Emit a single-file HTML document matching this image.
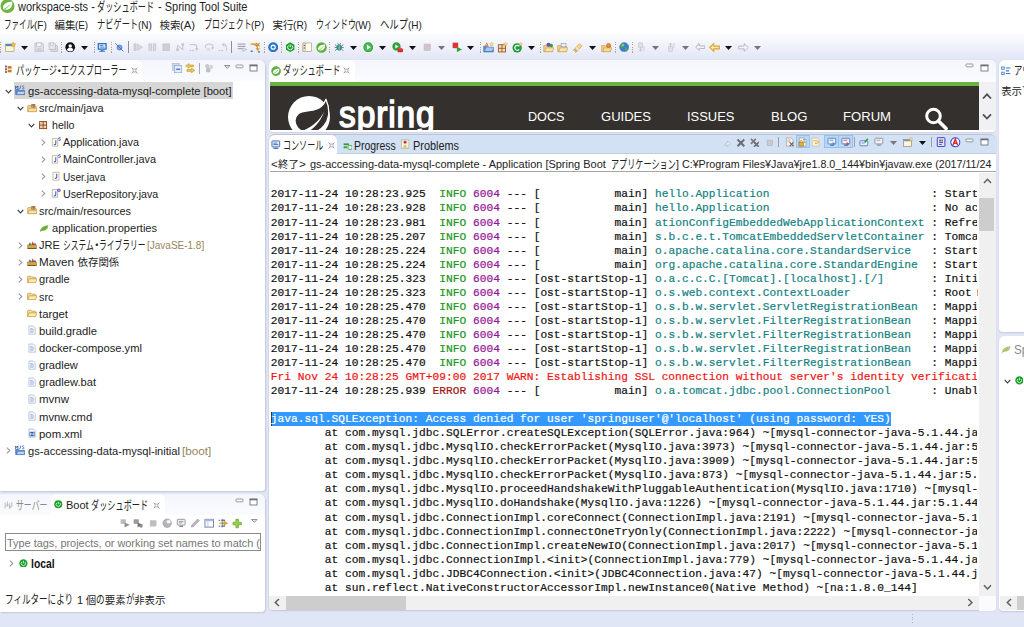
<!DOCTYPE html>
<html lang="ja"><head><meta charset="utf-8"><title>workspace-sts</title>
<style>
*{box-sizing:border-box;margin:0;padding:0}
html,body{width:1024px;height:627px;overflow:hidden;background:#e1e6f6}
body{position:relative;font-family:"Liberation Sans","Noto Sans CJK JP",sans-serif;font-size:11.6px;color:#222}
.a{position:absolute}
.t{position:absolute;white-space:pre;line-height:16px;height:16px;transform-origin:0 50%}
.panel{position:absolute;background:#fff;border-radius:5px 5px 3px 3px}
.mono{font-family:"Liberation Mono","Noto Sans CJK JP",monospace}
.k{display:inline-block;letter-spacing:0;height:16px;vertical-align:top}
.k>i{display:inline-block;transform-origin:0 50%;font-style:normal;font-size:1.04em;position:relative;top:.4px}
.j>i{font-size:.9em;top:0}
.j{font-weight:inherit}
.l,.l>u{display:inline-block;text-decoration:none;vertical-align:top;height:16px}
.l>u{transform-origin:0 50%}
.g{color:#8a8a8a}
.dec{color:#96845a}
#con{position:absolute;left:270.8px;top:173.4px;width:706.2px;letter-spacing:.025px;height:421.5px;overflow:hidden;font-family:"Liberation Mono",monospace;font-size:11.2px;line-height:14.06px;white-space:pre;color:#111;tab-size:8;-webkit-text-stroke:0.2px currentColor}
#con div{height:14.06px}
.i{color:#1a961a}.p{color:#951595}.c{color:#148282}.e{color:#a01414}.r{color:#f01414}
.sel{color:#fff}
</style></head><body>
<div class="a" style="left:0;top:0;width:1024px;height:34px;background:#fff"></div>
<div class="a" style="left:0;top:34px;width:1024px;height:26px;background:linear-gradient(#fcfcff,#eceff9 60%,#e1e6f6)"></div>
<svg class="a" style="left:0;top:-2px" width="16" height="16" viewBox="0 0 16 16"><circle cx="7.5" cy="8" r="7" fill="#6db33f"></circle><path d="M3.2 11.5 C2 7 5.5 4.2 12.2 3.6 C12.8 8 11 12.2 5.2 11.6 C4.4 11.5 3.8 11.5 3.2 11.5Z" fill="#fff"></path><path d="M3.4 11.6 C5.5 10.5 8 9 10 6.6" stroke="#6db33f" stroke-width="0.9" fill="none"></path></svg>
<span class="t " style="left:17.5px;top:-1px;font-size:12.2px;"><u class="l" style="width: 79.85px;"><u style="transform: scaleX(0.9);">workspace-sts - </u></u><i class="k" style="width: 57.18px;"><i style="transform: scaleX(0.6438);">ダッシュボード</i></i><u class="l" style="width: 92.48px;"><u style="transform: scaleX(0.9);"> - Spring Tool Suite</u></u></span>
<span class="t " style="left:3.5px;top:17px;"><i class="k" style="width: 30.26px;"><i style="transform: scaleX(0.6271);">ファイル</i></i><u class="l" style="width: 12.74px;"><u style="transform: scaleX(0.86);">(F)</u></u></span>
<span class="t " style="left:54.5px;top:17px;"><i class="k j" style="width:20.88px"><i>編集</i></i><u class="l" style="width: 13.13px;"><u style="transform: scaleX(0.8485);">(E)</u></u></span>
<span class="t " style="left:96.5px;top:17px;"><i class="k" style="width: 41.15px;"><i style="transform: scaleX(0.6821);">ナビゲート</i></i><u class="l" style="width: 13.85px;"><u style="transform: scaleX(0.86);">(N)</u></u></span>
<span class="t " style="left:159.5px;top:17px;"><i class="k j" style="width:20.88px"><i>検索</i></i><u class="l" style="width: 15.13px;"><u style="transform: scaleX(0.9778);">(A)</u></u></span>
<span class="t " style="left:203.5px;top:17px;"><i class="k" style="width: 47.7px;"><i style="transform: scaleX(0.6589);">プロジェクト</i></i><u class="l" style="width: 13.3px;"><u style="transform: scaleX(0.86);">(P)</u></u></span>
<span class="t " style="left:272.5px;top:17px;"><i class="k j" style="width:20.88px"><i>実行</i></i><u class="l" style="width: 14.13px;"><u style="transform: scaleX(0.8768);">(R)</u></u></span>
<span class="t " style="left:315.5px;top:17px;"><i class="k" style="width: 39.94px;"><i style="transform: scaleX(0.6622);">ウィンドウ</i></i><u class="l" style="width: 16.06px;"><u style="transform: scaleX(0.86);">(W)</u></u></span>
<span class="t " style="left:379.5px;top:17px;"><i class="k" style="width: 28.15px;"><i style="transform: scaleX(0.7777);">ヘルプ</i></i><u class="l" style="width: 13.85px;"><u style="transform: scaleX(0.86);">(H)</u></u></span>
<div class="a" style="left:0.3px;top:42px;width:1px;height:10.5px;background:repeating-linear-gradient(#b3a284 0 1.1px,transparent 1.1px 2.35px)"></div>
<svg class="a" style="left:4.50px;top:41.50px" width="11" height="11" viewBox="0 0 16 16"><rect x="1" y="3" width="12" height="11" fill="#fdf6dc" stroke="#b59a5a"></rect><rect x="1" y="3" width="12" height="3" fill="#4f86c6"></rect><path d="M12 0l1.2 2.3 2.5.4-1.8 1.8.4 2.5L12 5.8 9.7 7l.4-2.5L8.300 2.700l2.500-.4z" fill="#f2c230" stroke="#b98a12" stroke-width=".5"></path></svg>
<svg class="a" style="left:20.50px;top:45.60px" width="7" height="4" viewBox="0 0 7 4"><path d="M0 0H7L3.5 4Z" fill="#111"></path></svg>
<svg class="a" style="left:33.60px;top:41.80px" width="10.4" height="10.4" viewBox="0 0 16 16"><path d="M1.500 1.500h11l2 2v11h-13z" fill="#e4e4e6" stroke="#b4b4b8"></path><rect x="4" y="1.500" width="7" height="5" fill="#f8f8f8" stroke="#b9b9bd"></rect><rect x="4" y="9.500" width="8" height="5" fill="#cfcfd3"></rect></svg>
<svg class="a" style="left:47.80px;top:41.80px" width="10.4" height="10.4" viewBox="0 0 16 16"><path d="M4.500 4.500h8l2 2v8h-10z" fill="#dcdcdf" stroke="#b4b4b8"></path><path d="M1.500 1.500h8l2 2v8h-10z" fill="#e6e6e8" stroke="#b4b4b8"></path><rect x="3.500" y="1.500" width="5" height="3.500" fill="#f8f8f8" stroke="#bbb"></rect></svg>
<div class="a" style="left:61.0px;top:42px;width:1px;height:10.5px;background:repeating-linear-gradient(#b3a284 0 1.1px,transparent 1.1px 2.35px)"></div>
<svg class="a" style="left:65.30px;top:41.80px" width="10.4" height="10.4" viewBox="0 0 16 16"><circle cx="8" cy="8" r="7.500" fill="#111"></circle><circle cx="8" cy="6" r="2.700" fill="#fff"></circle><path d="M3 12.500c.8-3 2.500-3.600 5-3.600s4.200.6 5 3.600c-1.500 1.600-3 2.200-5 2.200s-3.500-.6-5-2.200z" fill="#fff"></path></svg>
<svg class="a" style="left:81.00px;top:45.60px" width="7" height="4" viewBox="0 0 7 4"><path d="M0 0H7L3.5 4Z" fill="#111"></path></svg>
<div class="a" style="left:93.5px;top:42px;width:1px;height:10.5px;background:repeating-linear-gradient(#b3a284 0 1.1px,transparent 1.1px 2.35px)"></div>
<svg class="a" style="left:97.30px;top:41.80px" width="10.4" height="10.4" viewBox="0 0 16 16"><rect x="1" y="1.500" width="14" height="10.500" rx="1" fill="#2f6fc4"></rect><rect x="3" y="3.500" width="10" height="6.500" fill="#dfeaf8"></rect><rect x="4.500" y="5" width="5" height="1.200" fill="#2f6fc4"></rect><rect x="4.500" y="7.200" width="7" height="1.200" fill="#2f6fc4"></rect><rect x="6" y="12" width="4" height="1.500" fill="#2f6fc4"></rect><rect x="3.500" y="13.500" width="9" height="1.500" fill="#2f6fc4"></rect></svg>
<div class="a" style="left:111.0px;top:42px;width:1px;height:10.5px;background:repeating-linear-gradient(#b3a284 0 1.1px,transparent 1.1px 2.35px)"></div>
<svg class="a" style="left:114.10px;top:41.80px" width="10.4" height="10.4" viewBox="0 0 16 16"><circle cx="8.500" cy="8.500" r="3.800" fill="#7fa9de" stroke="#3a6cb8" stroke-width="1.100"></circle><path d="M2 2l12.500 12.500" stroke="#3a6cb8" stroke-width="1.400"></path></svg>
<div class="a" style="left:128.0px;top:41px;width:1px;height:12px;background:#8f8f98"></div>
<svg class="a" style="left:133.30px;top:41.80px" width="10.4" height="10.4" viewBox="0 0 16 16"><rect x="1.500" y="3" width="3" height="10" fill="#d9d9dc" stroke="#bdbdc2"></rect><path d="M6.500 3l8 5-8 5z" fill="#d9d9dc" stroke="#bdbdc2"></path></svg>
<svg class="a" style="left:147.30px;top:41.80px" width="10.4" height="10.4" viewBox="0 0 16 16"><rect x="3" y="3" width="4" height="10" fill="#dcdcdf" stroke="#bdbdc2"></rect><rect x="9.500" y="3" width="4" height="10" fill="#dcdcdf" stroke="#bdbdc2"></rect></svg>
<svg class="a" style="left:161.30px;top:41.80px" width="10.4" height="10.4" viewBox="0 0 16 16"><rect x="3" y="3" width="10" height="10" fill="#cfcfd3" stroke="#bdbdc2"></rect></svg>
<svg class="a" style="left:174.80px;top:41.80px" width="10.4" height="10.4" viewBox="0 0 16 16"><circle cx="4" cy="12" r="2.200" fill="#c4c4c9"></circle><circle cx="12" cy="4" r="2.200" fill="#c4c4c9"></circle><path d="M4 12V5l8 7V4" stroke="#c0c0c5" stroke-width="1.500" fill="none"></path></svg>
<svg class="a" style="left:188.80px;top:41.80px" width="10.4" height="10.4" viewBox="0 0 16 16"><path d="M1 4h7c3 0 4 2 4 5v2" stroke="#c4c4c9" stroke-width="1.600" fill="none"></path><path d="M9 9.500h6l-3 4z" fill="#c4c4c9"></path><rect x="1" y="12.500" width="2.500" height="1.500" fill="#b9b9c8"></rect><rect x="5" y="12.500" width="2.500" height="1.500" fill="#b9b9c8"></rect></svg>
<svg class="a" style="left:203.80px;top:41.80px" width="10.4" height="10.4" viewBox="0 0 16 16"><path d="M2 9c0-4 3-6 6-6s6 2 6 6" stroke="#c8c8cc" stroke-width="1.600" fill="none"></path><path d="M10.500 8h5l-2.500 4z" fill="#c8c8cc"></path><rect x="4" y="10" width="5" height="3" rx="1.500" fill="none" stroke="#c8c8cc"></rect></svg>
<svg class="a" style="left:217.80px;top:41.80px" width="10.4" height="10.4" viewBox="0 0 16 16"><path d="M13 13V8c0-3-1.500-4-4-4" stroke="#c8c8cc" stroke-width="1.600" fill="none"></path><path d="M10 1v6.500L5.500 4.200z" fill="#c8c8cc"></path><rect x="1" y="12.500" width="2.500" height="1.500" fill="#b9b9c8"></rect><rect x="5" y="12.500" width="2.500" height="1.500" fill="#b9b9c8"></rect></svg>
<div class="a" style="left:230.9px;top:41px;width:1px;height:12px;background:#8f8f98"></div>
<svg class="a" style="left:236.60px;top:41.80px" width="10.4" height="10.4" viewBox="0 0 16 16"><rect x="1" y="2.500" width="12" height="1.600" fill="#9c9ca2"></rect><rect x="1" y="6" width="12" height="1.600" fill="#9c9ca2"></rect><rect x="1" y="9.500" width="8" height="1.600" fill="#9c9ca2"></rect><path d="M9 9l6 2.500-6 3z" fill="#e9e9ec" stroke="#9c9ca2" stroke-width=".8"></path></svg>
<svg class="a" style="left:249.90px;top:41.50px" width="11" height="11" viewBox="0 0 16 16"><path d="M1 3h9" stroke="#d79a2b" stroke-width="2"></path><path d="M5 4c5 0 6 2 6 6" stroke="#d79a2b" stroke-width="1.800" fill="none"></path><path d="M8 9h6.500l-3.200 4z" fill="#d79a2b"></path><path d="M9 1.500l5 5M14 1.500l-5 5" stroke="#c7861c" stroke-width="1.600"></path><rect x="1" y="12.500" width="3" height="1.800" fill="#3d63b8"></rect><rect x="11.500" y="13.500" width="3" height="1.800" fill="#3d63b8"></rect></svg>
<div class="a" style="left:263.7px;top:42px;width:1px;height:10.5px;background:repeating-linear-gradient(#b3a284 0 1.1px,transparent 1.1px 2.35px)"></div>
<svg class="a" style="left:267.80px;top:41.80px" width="10.4" height="10.4" viewBox="0 0 16 16"><circle cx="8" cy="8" r="7.700" fill="#2877c6"></circle><circle cx="8" cy="8" r="4" fill="#fff"></circle><circle cx="8" cy="8" r="2" fill="#2877c6"></circle></svg>
<div class="a" style="left:280.9px;top:42px;width:1px;height:10.5px;background:repeating-linear-gradient(#b3a284 0 1.1px,transparent 1.1px 2.35px)"></div>
<svg class="a" style="left:285.00px;top:41.80px" width="10.4" height="10.4" viewBox="0 0 16 16"><path d="M8 .5l6.500 3.750v7.500L8 15.500l-6.500-3.750v-7.500z" fill="#19a027"></path><path d="M5.300 5.300a3.900 3.900 0 1 0 5.400 0" stroke="#fff" stroke-width="1.400" fill="none"></path><path d="M8 3.500v4.500" stroke="#fff" stroke-width="1.400"></path></svg>
<div class="a" style="left:297.9px;top:42px;width:1px;height:10.5px;background:repeating-linear-gradient(#b3a284 0 1.1px,transparent 1.1px 2.35px)"></div>
<svg class="a" style="left:302.00px;top:41.80px" width="10.4" height="10.4" viewBox="0 0 16 16"><rect x="1.500" y="1.500" width="13" height="13" fill="#fefcf4" stroke="#a89a72"></rect><rect x="1.500" y="1.500" width="3.500" height="13" fill="#f0e8cc" stroke="#a89a72" stroke-width=".8"></rect><rect x="2.800" y="4.500" width="2" height="1.500" fill="#555"></rect><rect x="2.800" y="8.500" width="2" height="1.500" fill="#555"></rect></svg>
<svg class="a" style="left:315.80px;top:41.50px" width="11" height="11" viewBox="0 0 16 16"><circle cx="8" cy="8" r="7.600" fill="#5fb03a"></circle><path d="M3.300 12c-1.300-4.800 2.600-7.600 9.600-8.200.7 4.900-1.300 9.200-7.400 8.500-.9-.1-1.500-.2-2.200-.3z" fill="#fff"></path><path d="M3.400 12.200c2.300-1.200 5-2.900 7.200-5.600" stroke="#5fb03a" stroke-width="1" fill="none"></path></svg>
<div class="a" style="left:329.3px;top:42px;width:1px;height:10.5px;background:repeating-linear-gradient(#b3a284 0 1.1px,transparent 1.1px 2.35px)"></div>
<svg class="a" style="left:334.20px;top:41.80px" width="10.4" height="10.4" viewBox="0 0 16 16"><ellipse cx="8" cy="8.500" rx="3.600" ry="4.300" fill="#3f9a8a" stroke="#1f6a62"></ellipse><path d="M8 4.200v8.600" stroke="#cfe9e2" stroke-width=".8"></path><path d="M1.500 4l3 2.500M14.500 4l-3 2.500M1 8.500h3.500M15 8.500h-3.500M1.500 13.500l3-2.500M14.500 13.500l-3-2.500M5.500 1.500l1.500 2.500M10.500 1.500L9 4" stroke="#35607a" stroke-width="1.100"></path></svg>
<svg class="a" style="left:350.00px;top:45.60px" width="7" height="4" viewBox="0 0 7 4"><path d="M0 0H7L3.5 4Z" fill="#111"></path></svg>
<svg class="a" style="left:362.90px;top:41.80px" width="10.4" height="10.4" viewBox="0 0 16 16"><circle cx="8" cy="8" r="7.500" fill="#2fa338"></circle><circle cx="8" cy="8" r="6" fill="#47b84e"></circle><path d="M6 4l6 4-6 4z" fill="#fff"></path></svg>
<svg class="a" style="left:379.40px;top:45.60px" width="7" height="4" viewBox="0 0 7 4"><path d="M0 0H7L3.5 4Z" fill="#111"></path></svg>
<svg class="a" style="left:392.30px;top:41.50px" width="11" height="11" viewBox="0 0 16 16"><circle cx="6.500" cy="6.500" r="6" fill="#2fa338"></circle><path d="M4.800 3.500l4.700 3-4.700 3z" fill="#fff"></path><rect x="8" y="9.500" width="8" height="5.500" rx="1.500" fill="#d92b2b"></rect><rect x="9.500" y="8.500" width="5" height="2.500" rx="1" fill="#e35252"></rect></svg>
<svg class="a" style="left:408.70px;top:45.60px" width="7" height="4" viewBox="0 0 7 4"><path d="M0 0H7L3.5 4Z" fill="#111"></path></svg>
<svg class="a" style="left:422.40px;top:41.80px" width="10.4" height="10.4" viewBox="0 0 16 16"><rect x="3.200" y="3.200" width="9.600" height="9.600" fill="#d2c4c8" stroke="#c6babe"></rect></svg>
<svg class="a" style="left:438.00px;top:45.60px" width="7" height="4" viewBox="0 0 7 4"><path d="M0 0H7L3.5 4Z" fill="#737378"></path></svg>
<svg class="a" style="left:451.80px;top:41.80px" width="10.4" height="10.4" viewBox="0 0 16 16"><rect x="1" y="1" width="8.500" height="8.500" fill="#e03434"></rect><path d="M7.500 7.500l8 4-8 4z" fill="#2fa338"></path></svg>
<svg class="a" style="left:467.30px;top:45.60px" width="7" height="4" viewBox="0 0 7 4"><path d="M0 0H7L3.5 4Z" fill="#111"></path></svg>
<div class="a" style="left:479.5px;top:42px;width:1px;height:10.5px;background:repeating-linear-gradient(#b3a284 0 1.1px,transparent 1.1px 2.35px)"></div>
<svg class="a" style="left:482.90px;top:41.50px" width="11" height="11" viewBox="0 0 16 16"><path d="M1 14.500V6h5l1.500 1.500H15v7z" fill="#5b8fd6" stroke="#2f5fa8" stroke-width=".8"></path><path d="M3 13l2-5h10l-2 5z" fill="#a9c8ee"></path><path d="M5 1l-2.500 6h1.300l.5-1.400h2.400l.5 1.400H8.500L6 1zM4.700 4.600l.8-2.300.8 2.300z" fill="#d9731a"></path><path d="M12.500 0l.9 1.900 2.100.3-1.500 1.500.3 2.100-1.800-1-1.900 1 .4-2.100-1.500-1.500 2.100-.3z" fill="#f7dc8a" stroke="#cfa84e" stroke-width=".5"></path></svg>
<svg class="a" style="left:497.30px;top:41.50px" width="11" height="11" viewBox="0 0 16 16"><rect x="2" y="4" width="10.500" height="10.500" fill="#f1dcc0" stroke="#9a5a1f" stroke-width="1.300"></rect><path d="M7.200 4v10.500M2 9.200h10.500" stroke="#9a5a1f" stroke-width="1.300"></path><path d="M12.500 0l.9 1.900 2.100.3-1.500 1.500.3 2.100-1.800-1-1.900 1 .4-2.100-1.500-1.500 2.100-.3z" fill="#f7dc8a" stroke="#cfa84e" stroke-width=".5"></path></svg>
<svg class="a" style="left:511.80px;top:41.50px" width="11" height="11" viewBox="0 0 16 16"><circle cx="7.500" cy="8.500" r="6.800" fill="#1e9a3a"></circle><path d="M10.500 6.200a3.600 3.600 0 1 0 0 4.600" stroke="#fff" stroke-width="1.700" fill="none"></path><path d="M12.500 0l.9 1.900 2.100.3-1.500 1.500.3 2.100-1.800-1-1.900 1 .4-2.100-1.500-1.500 2.100-.3z" fill="#f7dc8a" stroke="#cfa84e" stroke-width=".5"></path></svg>
<svg class="a" style="left:527.90px;top:45.60px" width="7" height="4" viewBox="0 0 7 4"><path d="M0 0H7L3.5 4Z" fill="#111"></path></svg>
<div class="a" style="left:539.7px;top:42px;width:1px;height:10.5px;background:repeating-linear-gradient(#b3a284 0 1.1px,transparent 1.1px 2.35px)"></div>
<svg class="a" style="left:542.90px;top:41.50px" width="11" height="11" viewBox="0 0 16 16"><path d="M1 14V5h4.500l1.500 1.500H14V14z" fill="#f0cc84" stroke="#bf9440" stroke-width=".8"></path><path d="M2.500 14l2-5.500H16L13.500 14z" fill="#f9e3ae" stroke="#bf9440" stroke-width=".8"></path><circle cx="8" cy="4" r="3" fill="#6a4fb3"></circle><circle cx="12" cy="5" r="2.500" fill="#2e9a52"></circle></svg>
<svg class="a" style="left:557.30px;top:41.50px" width="11" height="11" viewBox="0 0 16 16"><path d="M1 14V5h4.500l1.500 1.500H14V14z" fill="#f0cc84" stroke="#bf9440" stroke-width=".8"></path><path d="M2.500 14l2-5.500H16L13.500 14z" fill="#f9e3ae" stroke="#bf9440" stroke-width=".8"></path><rect x="6" y="2" width="7" height="5" fill="#eef2fa" stroke="#7b8bb0" stroke-width=".8"></rect></svg>
<svg class="a" style="left:571.90px;top:41.50px" width="11" height="11" viewBox="0 0 16 16"><path d="M1.500 12.500L11 2.500l3.500 3.500-9.500 9.500z" fill="#f4d48a" stroke="#c59a46" stroke-width=".9"></path><path d="M3.500 10.500l3.500 3.500" stroke="#9a9aa6" stroke-width="1.600"></path><path d="M6 8l3.500 3.500" stroke="#fff3cc" stroke-width="1.500"></path><path d="M1.500 12.500l3.500 3L2 16z" fill="#fff"></path></svg>
<svg class="a" style="left:588.70px;top:45.60px" width="7" height="4" viewBox="0 0 7 4"><path d="M0 0H7L3.5 4Z" fill="#111"></path></svg>
<svg class="a" style="left:601.30px;top:41.50px" width="11" height="11" viewBox="0 0 16 16"><path d="M1 14V5h4.500l1.500 1.500H14V14z" fill="#f0cc84" stroke="#bf9440" stroke-width=".8"></path><path d="M2.500 14l2-5.500H16L13.500 14z" fill="#f7d996" stroke="#bf9440" stroke-width=".8"></path><circle cx="11" cy="5" r="3" fill="#e88b3a" stroke="#a85a14" stroke-width=".8"></circle></svg>
<div class="a" style="left:614.5px;top:42px;width:1px;height:10.5px;background:repeating-linear-gradient(#b3a284 0 1.1px,transparent 1.1px 2.35px)"></div>
<svg class="a" style="left:618.80px;top:41.80px" width="10.4" height="10.4" viewBox="0 0 16 16"><circle cx="8" cy="8" r="7.200" fill="#3b7fd1" stroke="#7d8aa5" stroke-width=".9"></circle><path d="M4 3.500c2-.8 4 .2 4.500 2 .4 1.700-1.500 2.200-2.500 3.500-.8 1-2 .5-2.800-1C2.400 6.500 2.800 4.300 4 3.500zM10 8.500c1.500-.5 3 .3 3.200 1.800.2 1.400-1.200 2.800-2.600 2.900-1.200 0-1.800-3.800-.6-4.700z" fill="#4cad4a"></path><ellipse cx="6" cy="4.500" rx="2.200" ry="1.200" fill="#cfe3fa" opacity=".75"></ellipse></svg>
<div class="a" style="left:631.9px;top:42px;width:1px;height:10.5px;background:repeating-linear-gradient(#b3a284 0 1.1px,transparent 1.1px 2.35px)"></div>
<svg class="a" style="left:636.00px;top:41.80px" width="10.4" height="10.4" viewBox="0 0 16 16"><rect x="4" y="1" width="6" height="8" rx="1" fill="#e2e2e6" stroke="#c3c3c9"></rect><path d="M7 8v6M4 11.500l3 3 3-3" stroke="#c3c3c9" stroke-width="1.400" fill="none"></path><rect x="11.500" y="6" width="1.500" height="8.500" fill="#d0d0d6"></rect></svg>
<svg class="a" style="left:652.10px;top:45.60px" width="7" height="4" viewBox="0 0 7 4"><path d="M0 0H7L3.5 4Z" fill="#737378"></path></svg>
<svg class="a" style="left:665.50px;top:41.80px" width="10.4" height="10.4" viewBox="0 0 16 16"><rect x="4" y="6.500" width="6" height="8" rx="1" fill="#e2e2e6" stroke="#c3c3c9"></rect><path d="M7 8V2M4 4.500l3-3 3 3" stroke="#c3c3c9" stroke-width="1.400" fill="none"></path><rect x="11.500" y="1.500" width="1.500" height="8.500" fill="#d0d0d6"></rect></svg>
<svg class="a" style="left:681.80px;top:45.60px" width="7" height="4" viewBox="0 0 7 4"><path d="M0 0H7L3.5 4Z" fill="#737378"></path></svg>
<svg class="a" style="left:694.50px;top:41.80px" width="10.4" height="10.4" viewBox="0 0 16 16"><path d="M1 8l5.500-5v3H15v4H6.500v3z" fill="#f4f4f6" stroke="#b0b0b8" stroke-width="1.300"></path><path d="M3 3l1 1M5 1.500l.5 1.500" stroke="#bdbdc4"></path></svg>
<svg class="a" style="left:708.80px;top:41.50px" width="11" height="11" viewBox="0 0 16 16"><path d="M1 8l6-5.500V6h8v4H7v3.500z" fill="#fcecb0" stroke="#dca02c" stroke-width="1.500"></path></svg>
<svg class="a" style="left:725.20px;top:45.60px" width="7" height="4" viewBox="0 0 7 4"><path d="M0 0H7L3.5 4Z" fill="#111"></path></svg>
<svg class="a" style="left:737.80px;top:41.50px" width="11" height="11" viewBox="0 0 16 16"><path d="M15 8L9 2.500V6H1v4h8v3.500z" fill="#f6f6f8" stroke="#b0b0b8" stroke-width="1.300"></path></svg>
<svg class="a" style="left:754.20px;top:45.60px" width="7" height="4" viewBox="0 0 7 4"><path d="M0 0H7L3.5 4Z" fill="#737378"></path></svg>
<div class="panel" style="left:0;top:60px;width:265.4px;height:431px;border-radius:0 6px 3px 0;box-shadow:1px 1px 1.500px #c3c8dc"></div>
<div class="a" style="left:0;top:60px;width:265.4px;height:20.6px;background:linear-gradient(#f5f6fc,#fafbfe);border-radius:0 6px 0 0"></div>
<div class="a" style="left:0;top:60px;width:141.6px;height:21px;background:#fff;border-radius:0 6px 0 0"></div>
<svg class="a" style="left:4.00px;top:65.10px" width="9" height="9" viewBox="0 0 16 16"><rect x="2" y="1" width="3" height="3" fill="#6a5a4a"></rect><rect x="2" y="6" width="3" height="3" fill="#6a5a4a"></rect><rect x="2" y="11" width="3" height="3" fill="#6a5a4a"></rect><rect x="6.500" y="2" width="7" height="4.500" fill="#c8772c"></rect><rect x="6.500" y="8.500" width="7" height="4.500" fill="#c8772c"></rect><path d="M3.500 1v13" stroke="#6a5a4a" stroke-width=".8"></path></svg>
<span class="t " style="left:15.5px;top:62.5px;"><i class="k" style="width: 41.31px;"><i style="transform: scaleX(0.6848);">パッケージ</i></i><i class="k j" style="width:4.6px"><i style="margin-left:-3.2px;font-size:1em">・</i></i><i class="k" style="width: 66.1px;"><i style="transform: scaleX(0.6848);">エクスプローラー</i></i></span>
<svg class="a" style="left:130.5px;top:66.8px" width="7" height="7" viewBox="0 0 7 7"><path d="M.6.6L2.300 2.300M6.400.6L4.700 2.300M.6 6.400L2.300 4.700M6.400 6.400L4.700 4.700" stroke="#9a9aa2" stroke-width=".9"></path><rect x="2" y="2" width="3" height="3" fill="none" stroke="#9a9aa2" stroke-width=".7"></rect></svg>
<svg class="a" style="left:171.70px;top:62.80px" width="10.4" height="10.4" viewBox="0 0 16 16"><rect x="1" y="1" width="10" height="10" fill="#cfdcf0" stroke="#9fb3d6"></rect><rect x="4" y="4" width="11" height="11" fill="#e4ecf8" stroke="#7f9ccc"></rect><rect x="6.500" y="8.700" width="6" height="1.800" fill="#2f66b5"></rect></svg>
<svg class="a" style="left:185.40px;top:63.00px" width="10.4" height="10.4" viewBox="0 0 16 16"><path d="M6 1L1 4.500 6 8V5.800h7V3.200H6z" fill="#f7cf58" stroke="#b8860b" stroke-width=".9"></path><path d="M10 8l5 3.500-5 3.500v-2.200H3v-2.600h7z" fill="#f7cf58" stroke="#b8860b" stroke-width=".9"></path></svg>
<div class="a" style="left:199.0px;top:63px;width:1px;height:11px;background:#a9a9b3"></div>
<svg class="a" style="left:204.40px;top:62.80px" width="10.4" height="10.4" viewBox="0 0 16 16"><circle cx="5" cy="5" r="3.300" fill="#c9c9cf"></circle><circle cx="11" cy="6" r="3.300" fill="#d4d4d9"></circle><circle cx="6.500" cy="11" r="3.600" fill="#bdbdc4"></circle></svg>
<svg class="a" style="left:223.7px;top:64.5px" width="6.600" height="4" viewBox="0 0 6.600 4"><path d="M.5.500H6.100L3.300 3.400Z" fill="#e6e6ea" stroke="#77777f" stroke-width=".8"></path></svg>
<svg class="a" style="left:234.9px;top:63.5px" width="9" height="5" viewBox="0 0 9 5"><rect x="1" y="1" width="7" height="2.800" rx=".8" fill="#fff" stroke="#85858d" stroke-width=".85"></rect></svg>
<svg class="a" style="left:249.0px;top:63.599999999999994px" width="9" height="8" viewBox="0 0 9 8"><rect x="1" y="1.200" width="7" height="5.800" fill="#fff" stroke="#6e6e76" stroke-width=".85"></rect><rect x=".6" y=".6" width="7.800" height="1.700" fill="#6e6e76"></rect></svg>
<div class="a" style="left:14px;top:82px;width:219px;height:16.800px;background:#d6d6d6"></div>
<svg class="a" style="left:4.5px;top:88.6px" width="7" height="5" viewBox="0 0 7 5"><path d="M.7.800L3.500 3.800 6.300.8" stroke="#3c3c3c" stroke-width="1.150" fill="none"></path></svg>
<svg class="a" style="left:15.20px;top:85.40px" width="10.2" height="10.2" viewBox="0 0 16 16"><path d="M1 15V7h5l1.500 1.500H15V15z" fill="#5c8fd8" stroke="#2d5ca6" stroke-width=".9"></path><path d="M2.500 15l1.800-5H16l-2 5z" fill="#b9d3f3" stroke="#2d5ca6" stroke-width=".7"></path><path d="M1 6.500v-5l1.800 2.500L4.600 1.500v5" stroke="#2a4a9a" stroke-width="1.200" fill="none"></path><path d="M8.500 1v3.600c0 1.200-1.400 1.300-2 .6" stroke="#3b5fb5" stroke-width="1.200" fill="none"></path><path d="M14.300 1.600c-1.600-1-3.200-.2-2.800 1 .4 1.100 2.800.9 2.900 2.300.1 1.200-1.900 1.600-3.300.6" stroke="#2a6fd0" stroke-width="1.200" fill="none"></path></svg>
<span class="t " style="left:28.4px;top:82.9px;"><u class="l" style="width: 203.5px;"><u style="transform: scaleX(0.9628);">gs-accessing-data-mysql-complete [boot]</u></u></span>
<svg class="a" style="left:16.5px;top:105.74px" width="7" height="5" viewBox="0 0 7 5"><path d="M.7.800L3.500 3.800 6.300.8" stroke="#3c3c3c" stroke-width="1.150" fill="none"></path></svg>
<svg class="a" style="left:26.90px;top:102.54px" width="10.2" height="10.2" viewBox="0 0 16 16"><path d="M1 13.500V5.500c0-1 .5-1.500 1.500-1.500H6l1.500 1.500h6c1 0 1.500.5 1.500 1.500v6.500z" fill="#f0cf86" stroke="#b48a36" stroke-width=".9"></path><path d="M1.500 13.500l1.800-5H16l-2 5z" fill="#f8e2a8" stroke="#b48a36" stroke-width=".7"></path><rect x="7.500" y="2" width="5" height="4.500" fill="#e9c9a0" stroke="#8a4a1c" stroke-width=".9"></rect><path d="M10 2v4.500M7.500 4.200h5" stroke="#8a4a1c" stroke-width=".8"></path></svg>
<span class="t " style="left:39.3px;top:100.04px;"><u class="l" style="width: 64.7px;"><u style="transform: scaleX(0.9473);">src/main/java</u></u></span>
<svg class="a" style="left:28.3px;top:122.88px" width="7" height="5" viewBox="0 0 7 5"><path d="M.7.800L3.500 3.800 6.300.8" stroke="#3c3c3c" stroke-width="1.150" fill="none"></path></svg>
<svg class="a" style="left:38.30px;top:119.68px" width="10.2" height="10.2" viewBox="0 0 16 16"><rect x="2.500" y="2.500" width="11" height="11" fill="#f0d6b8" stroke="#8e4a18" stroke-width="1.500"></rect><path d="M8 2.500v11M2.500 8h11" stroke="#8e4a18" stroke-width="1.500"></path></svg>
<span class="t " style="left:51.5px;top:117.18px;"><u class="l" style="width: 22.5px;"><u style="transform: scaleX(0.9184);">hello</u></u></span>
<svg class="a" style="left:41.099999999999994px;top:138.72000000000003px" width="5" height="7" viewBox="0 0 5 7"><path d="M.8.700L3.800 3.500.8 6.300" stroke="#9a9a9a" stroke-width="1.100" fill="none"></path></svg>
<svg class="a" style="left:51.10px;top:136.82px" width="10.2" height="10.2" viewBox="0 0 16 16"><path d="M2 2.500h8.500v12H2z" fill="#fffdf3" stroke="#a89c78" stroke-width="1"></path><path d="M7.500 5v5.500c0 1.800-2 1.900-3 1" stroke="#3a5bbf" stroke-width="1.600" fill="none"></path><path d="M15 1.300c-1.500-.9-3.400-.3-3.100.9.300 1 2.900.8 3 2 .1 1.200-2 1.600-3.300.7" stroke="#2f4fd8" stroke-width="1.400" fill="none"></path></svg>
<span class="t " style="left:63px;top:134.32000000000002px;"><u class="l" style="width: 76px;"><u style="transform: scaleX(0.9357);">Application.java</u></u></span>
<svg class="a" style="left:41.099999999999994px;top:155.86px" width="5" height="7" viewBox="0 0 5 7"><path d="M.8.700L3.800 3.500.8 6.300" stroke="#9a9a9a" stroke-width="1.100" fill="none"></path></svg>
<svg class="a" style="left:51.10px;top:153.96px" width="10.2" height="10.2" viewBox="0 0 16 16"><path d="M2 2.500h8.500v12H2z" fill="#fffdf3" stroke="#a89c78" stroke-width="1"></path><path d="M7.500 5v5.500c0 1.800-2 1.900-3 1" stroke="#3a5bbf" stroke-width="1.600" fill="none"></path><path d="M15 1.300c-1.500-.9-3.400-.3-3.100.9.300 1 2.900.8 3 2 .1 1.200-2 1.600-3.300.7" stroke="#2f4fd8" stroke-width="1.400" fill="none"></path></svg>
<span class="t " style="left:63px;top:151.46px;"><u class="l" style="width: 93px;"><u style="transform: scaleX(0.937);">MainController.java</u></u></span>
<svg class="a" style="left:41.099999999999994px;top:173.0px" width="5" height="7" viewBox="0 0 5 7"><path d="M.8.700L3.800 3.500.8 6.300" stroke="#9a9a9a" stroke-width="1.100" fill="none"></path></svg>
<svg class="a" style="left:51.10px;top:171.10px" width="10.2" height="10.2" viewBox="0 0 16 16"><path d="M3 2h9.500v12.500H3z" fill="#fffdf3" stroke="#a89c78" stroke-width="1"></path><path d="M9 4.500v5.500c0 1.800-2 1.900-3 1" stroke="#3a5bbf" stroke-width="1.600" fill="none"></path></svg>
<span class="t " style="left:63px;top:168.6px;"><u class="l" style="width: 42.3px;"><u style="transform: scaleX(0.8753);">User.java</u></u></span>
<svg class="a" style="left:41.099999999999994px;top:190.14000000000001px" width="5" height="7" viewBox="0 0 5 7"><path d="M.8.700L3.800 3.500.8 6.300" stroke="#9a9a9a" stroke-width="1.100" fill="none"></path></svg>
<svg class="a" style="left:51.10px;top:188.24px" width="10.2" height="10.2" viewBox="0 0 16 16"><path d="M2 2.500h8.500v12H2z" fill="#fffdf3" stroke="#8a8a9a" stroke-width="1"></path><path d="M7.500 5v5.500c0 1.800-2 1.900-3 1" stroke="#4a4fc0" stroke-width="1.600" fill="none"></path><circle cx="12.500" cy="3.500" r="2.600" fill="#6a4fc0"></circle><path d="M12.500 2v3" stroke="#fff" stroke-width="1"></path></svg>
<span class="t " style="left:63px;top:185.74px;"><u class="l" style="width: 95.3px;"><u style="transform: scaleX(0.9205);">UserRepository.java</u></u></span>
<svg class="a" style="left:16.5px;top:208.58000000000004px" width="7" height="5" viewBox="0 0 7 5"><path d="M.7.800L3.500 3.800 6.300.8" stroke="#3c3c3c" stroke-width="1.150" fill="none"></path></svg>
<svg class="a" style="left:26.90px;top:205.38px" width="10.2" height="10.2" viewBox="0 0 16 16"><path d="M1 13.500V5.500c0-1 .5-1.500 1.500-1.500H6l1.500 1.500h6c1 0 1.500.5 1.500 1.500v6.500z" fill="#f0cf86" stroke="#b48a36" stroke-width=".9"></path><path d="M1.500 13.500l1.800-5H16l-2 5z" fill="#f8e2a8" stroke="#b48a36" stroke-width=".7"></path><rect x="7.500" y="2" width="5" height="4.500" fill="#e9c9a0" stroke="#8a4a1c" stroke-width=".9"></rect><path d="M10 2v4.500M7.500 4.200h5" stroke="#8a4a1c" stroke-width=".8"></path></svg>
<span class="t " style="left:39.3px;top:202.88000000000002px;"><u class="l" style="width: 92px;"><u style="transform: scaleX(0.9394);">src/main/resources</u></u></span>
<svg class="a" style="left:38.80px;top:222.52px" width="10.2" height="10.2" viewBox="0 0 16 16"><path d="M1.500 13.500C2 8 6 4 14.500 3.500c0 6-4.500 10-11 8.500z" fill="#7ab648"></path><path d="M2 13.500C5 10.500 8 8 12 6" stroke="#4c8a24" stroke-width=".9" fill="none"></path></svg>
<span class="t " style="left:51.5px;top:220.02px;"><u class="l" style="width: 105px;"><u style="transform: scaleX(0.9527);">application.properties</u></u></span>
<svg class="a" style="left:17.8px;top:241.56px" width="5" height="7" viewBox="0 0 5 7"><path d="M.8.700L3.800 3.500.8 6.300" stroke="#9a9a9a" stroke-width="1.100" fill="none"></path></svg>
<svg class="a" style="left:27.10px;top:239.66px" width="10.2" height="10.2" viewBox="0 0 16 16"><rect x="1" y="8" width="14" height="5.500" fill="#d9a648" stroke="#8a6a1e" stroke-width=".7"></rect><path d="M2.500 8l2-5 2.500 5z" fill="#3c8a4a"></path><path d="M6.500 8l2.500-6 2.500 6z" fill="#c2452c"></path><path d="M10.500 8l2-4 2 4z" fill="#3f66b8"></path><rect x="1" y="12.500" width="14" height="1.500" fill="#6b531a"></rect></svg>
<span class="t " style="left:39.3px;top:237.16px;"><u class="l" style="width: 23.87px;"><u style="transform: scaleX(0.95);">JRE </u></u><i class="k" style="width: 31.01px;"><i style="transform: scaleX(0.6427);">システム</i></i><i class="k j" style="width:4.6px"><i style="margin-left:-3.2px;font-size:1em">・</i></i><i class="k" style="width: 46.52px;"><i style="transform: scaleX(0.6427);">ライブラリー</i></i></span>
<span class="t dec" style="left:147.3px;top:237.16px;"><u class="l" style="width: 57.2px;"><u style="transform: scaleX(0.8616);">[JavaSE-1.8]</u></u></span>
<svg class="a" style="left:17.8px;top:258.7px" width="5" height="7" viewBox="0 0 5 7"><path d="M.8.700L3.800 3.500.8 6.300" stroke="#9a9a9a" stroke-width="1.100" fill="none"></path></svg>
<svg class="a" style="left:27.10px;top:256.80px" width="10.2" height="10.2" viewBox="0 0 16 16"><rect x="1" y="8" width="14" height="5.500" fill="#d9a648" stroke="#8a6a1e" stroke-width=".7"></rect><path d="M2.500 8l2-5 2.500 5z" fill="#3c8a4a"></path><path d="M6.500 8l2.500-6 2.500 6z" fill="#c2452c"></path><path d="M10.500 8l2-4 2 4z" fill="#3f66b8"></path><rect x="1" y="12.500" width="14" height="1.500" fill="#6b531a"></rect></svg>
<span class="t " style="left:39.3px;top:254.29999999999995px;"><u class="l" style="width: 38.25px;"><u style="transform: scaleX(1.0058);">Maven </u></u><i class="k j" style="width:41.76px"><i>依存関係</i></i></span>
<svg class="a" style="left:17.8px;top:275.84000000000003px" width="5" height="7" viewBox="0 0 5 7"><path d="M.8.700L3.800 3.500.8 6.300" stroke="#9a9a9a" stroke-width="1.100" fill="none"></path></svg>
<svg class="a" style="left:26.70px;top:273.94px" width="10.2" height="10.2" viewBox="0 0 16 16"><path d="M1 13.500V4.500c0-.8.400-1 1-1H6l1.500 1.500h5c.8 0 1 .4 1 1v2" fill="#f6dd9a" stroke="#b58b2e" stroke-width="1"></path><path d="M1 13.500l2.500-6H16l-2.500 6z" fill="#fbe9b4" stroke="#b58b2e" stroke-width="1"></path></svg>
<span class="t " style="left:39.3px;top:271.44px;"><u class="l" style="width: 30.7px;"><u style="transform: scaleX(0.9524);">gradle</u></u></span>
<svg class="a" style="left:17.8px;top:292.98px" width="5" height="7" viewBox="0 0 5 7"><path d="M.8.700L3.800 3.500.8 6.300" stroke="#9a9a9a" stroke-width="1.100" fill="none"></path></svg>
<svg class="a" style="left:26.70px;top:291.08px" width="10.2" height="10.2" viewBox="0 0 16 16"><path d="M1 13.500V4.500c0-.8.400-1 1-1H6l1.500 1.500h5c.8 0 1 .4 1 1v2" fill="#f6dd9a" stroke="#b58b2e" stroke-width="1"></path><path d="M1 13.500l2.500-6H16l-2.500 6z" fill="#fbe9b4" stroke="#b58b2e" stroke-width="1"></path></svg>
<span class="t " style="left:39.3px;top:288.58px;"><u class="l" style="width: 14.5px;"><u style="transform: scaleX(0.9374);">src</u></u></span>
<svg class="a" style="left:26.70px;top:308.22px" width="10.2" height="10.2" viewBox="0 0 16 16"><path d="M1 13.500V4.500c0-.8.400-1 1-1H6l1.500 1.500h5c.8 0 1 .4 1 1v2" fill="#f6dd9a" stroke="#b58b2e" stroke-width="1"></path><path d="M1 13.500l2.500-6H16l-2.500 6z" fill="#fbe9b4" stroke="#b58b2e" stroke-width="1"></path></svg>
<span class="t " style="left:39.3px;top:305.71999999999997px;"><u class="l" style="width: 29px;"><u style="transform: scaleX(0.9779);">target</u></u></span>
<svg class="a" style="left:27.00px;top:325.36px" width="10.2" height="10.2" viewBox="0 0 16 16"><path d="M3 1.500h7l3 3v10H3z" fill="#f4f7fd" stroke="#9aa6c4" stroke-width=".9"></path><path d="M5 5.500h4M5 7.500h6M5 9.500h6M5 11.500h5" stroke="#7f9bd0" stroke-width=".9"></path></svg>
<span class="t " style="left:39.3px;top:322.86px;"><u class="l" style="width: 58px;"><u style="transform: scaleX(0.9674);">build.gradle</u></u></span>
<svg class="a" style="left:27.00px;top:342.50px" width="10.2" height="10.2" viewBox="0 0 16 16"><path d="M3 1.500h7l3 3v10H3z" fill="#f4f7fd" stroke="#9aa6c4" stroke-width=".9"></path><path d="M5 5.500h4M5 7.500h6M5 9.500h6M5 11.500h5" stroke="#7f9bd0" stroke-width=".9"></path></svg>
<span class="t " style="left:39.3px;top:340.0px;"><u class="l" style="width: 103px;"><u style="transform: scaleX(0.9629);">docker-compose.yml</u></u></span>
<svg class="a" style="left:27.00px;top:359.64px" width="10.2" height="10.2" viewBox="0 0 16 16"><path d="M3 1.500h7l3 3v10H3z" fill="#f4f7fd" stroke="#9aa6c4" stroke-width=".9"></path><path d="M5 5.500h4M5 7.500h6M5 9.500h6M5 11.500h5" stroke="#7f9bd0" stroke-width=".9"></path></svg>
<span class="t " style="left:39.3px;top:357.14px;"><u class="l" style="width: 38.8px;"><u style="transform: scaleX(0.9554);">gradlew</u></u></span>
<svg class="a" style="left:27.00px;top:376.78px" width="10.2" height="10.2" viewBox="0 0 16 16"><path d="M3 1.500h7l3 3v10H3z" fill="#f4f7fd" stroke="#9aa6c4" stroke-width=".9"></path><path d="M5 5.500h4M5 7.500h6M5 9.500h6M5 11.500h5" stroke="#7f9bd0" stroke-width=".9"></path></svg>
<span class="t " style="left:39.3px;top:374.28px;"><u class="l" style="width: 57px;"><u style="transform: scaleX(0.961);">gradlew.bat</u></u></span>
<svg class="a" style="left:27.00px;top:393.92px" width="10.2" height="10.2" viewBox="0 0 16 16"><path d="M3 1.500h7l3 3v10H3z" fill="#f4f7fd" stroke="#9aa6c4" stroke-width=".9"></path><path d="M5 5.500h4M5 7.500h6M5 9.500h6M5 11.500h5" stroke="#7f9bd0" stroke-width=".9"></path></svg>
<span class="t " style="left:39.3px;top:391.41999999999996px;"><u class="l" style="width: 30px;"><u style="transform: scaleX(0.9907);">mvnw</u></u></span>
<svg class="a" style="left:27.00px;top:411.06px" width="10.2" height="10.2" viewBox="0 0 16 16"><path d="M3 1.500h7l3 3v10H3z" fill="#f4f7fd" stroke="#9aa6c4" stroke-width=".9"></path><path d="M5 5.500h4M5 7.500h6M5 9.500h6M5 11.500h5" stroke="#7f9bd0" stroke-width=".9"></path></svg>
<span class="t " style="left:39.3px;top:408.56px;"><u class="l" style="width: 53.2px;"><u style="transform: scaleX(0.9714);">mvnw.cmd</u></u></span>
<svg class="a" style="left:27.00px;top:428.20px" width="10.2" height="10.2" viewBox="0 0 16 16"><path d="M3 1.500h7l3 3v10H3z" fill="#f4f7fd" stroke="#9aa6c4" stroke-width=".9"></path><rect x="4" y="6" width="8" height="7" fill="#2f5fae"></rect><path d="M5.500 12V7.500L8 10.500l2.500-3V12" stroke="#fff" stroke-width="1.100" fill="none"></path></svg>
<span class="t " style="left:39.3px;top:425.7px;"><u class="l" style="width: 43px;"><u style="transform: scaleX(0.9815);">pom.xml</u></u></span>
<svg class="a" style="left:5.8px;top:447.24px" width="5" height="7" viewBox="0 0 5 7"><path d="M.8.700L3.800 3.500.8 6.300" stroke="#9a9a9a" stroke-width="1.100" fill="none"></path></svg>
<svg class="a" style="left:15.20px;top:445.34px" width="10.2" height="10.2" viewBox="0 0 16 16"><path d="M1 15V7h5l1.500 1.500H15V15z" fill="#5c8fd8" stroke="#2d5ca6" stroke-width=".9"></path><path d="M2.500 15l1.800-5H16l-2 5z" fill="#b9d3f3" stroke="#2d5ca6" stroke-width=".7"></path><path d="M1 6.500v-5l1.800 2.500L4.600 1.500v5" stroke="#2a4a9a" stroke-width="1.200" fill="none"></path><path d="M8.500 1v3.600c0 1.200-1.400 1.300-2 .6" stroke="#3b5fb5" stroke-width="1.200" fill="none"></path><path d="M14.300 1.600c-1.600-1-3.200-.2-2.800 1 .4 1.100 2.800.9 2.900 2.300.1 1.200-1.900 1.600-3.300.6" stroke="#2a6fd0" stroke-width="1.200" fill="none"></path></svg>
<span class="t " style="left:28.4px;top:442.84px;"><u class="l" style="width: 152px;"><u style="transform: scaleX(0.9589);">gs-accessing-data-mysql-initial</u></u></span>
<span class="t dec" style="left:182.3px;top:442.84px;"><u class="l" style="width: 29.3px;"><u style="transform: scaleX(1.0098);">[boot]</u></u></span>
<div class="panel" style="left:0;top:494.3px;width:265.4px;height:117.500px;border-radius:0 6px 4px 0;box-shadow:1px 1px 1.500px #c3c8dc"></div>
<div class="a" style="left:0;top:494.3px;width:265.4px;height:20.500px;background:linear-gradient(#f5f6fc,#fafbfe);border-radius:0 6px 0 0"></div>
<div class="a" style="left:51.4px;top:494.3px;width:113.400px;height:21px;background:#fff;border-radius:6px 6px 0 0"></div>
<svg class="a" style="left:3.50px;top:500.50px;opacity:0.8" width="9" height="9" viewBox="0 0 16 16"><path d="M2 3v10M6 1v9M10 4v10M14 2v8" stroke="#9aa0ad" stroke-width="1.500"></path><rect x="4" y="6" width="4" height="3" fill="#a9c08a"></rect><rect x="9" y="9" width="4" height="3" fill="#c9a0a0"></rect></svg>
<span class="t g" style="left:16px;top:497.2px;"><i class="k" style="width:31.50px"><i style="transform:scaleX(0.6528)">サーバー</i></i></span>
<svg class="a" style="left:54.20px;top:500.30px" width="8.6" height="8.6" viewBox="0 0 16 16"><circle cx="8" cy="8" r="7.500" fill="#19a027"></circle><path d="M5.300 5.300a3.900 3.900 0 1 0 5.400 0" stroke="#fff" stroke-width="1.400" fill="none"></path><path d="M8 3.200v4.600" stroke="#fff" stroke-width="1.400"></path></svg>
<span class="t " style="left:65.6px;top:497.2px;"><u class="l" style="width: 25.72px;"><u style="transform: scaleX(0.95);">Boot </u></u><i class="k" style="width: 57.28px;"><i style="transform: scaleX(0.6782);">ダッシュボード</i></i></span>
<svg class="a" style="left:152.8px;top:501.7px" width="7" height="7" viewBox="0 0 7 7"><path d="M.6.6L2.300 2.300M6.400.6L4.700 2.300M.6 6.400L2.300 4.700M6.400 6.400L4.700 4.700" stroke="#9a9aa2" stroke-width=".9"></path><rect x="2" y="2" width="3" height="3" fill="none" stroke="#9a9aa2" stroke-width=".7"></rect></svg>
<svg class="a" style="left:234.7px;top:497.8px" width="9" height="5" viewBox="0 0 9 5"><rect x="1" y="1" width="7" height="2.800" rx=".8" fill="#fff" stroke="#85858d" stroke-width=".85"></rect></svg>
<svg class="a" style="left:248.9px;top:498.4px" width="9" height="8" viewBox="0 0 9 8"><rect x="1" y="1.200" width="7" height="5.800" fill="#fff" stroke="#6e6e76" stroke-width=".85"></rect><rect x=".6" y=".6" width="7.800" height="1.700" fill="#6e6e76"></rect></svg>
<svg class="a" style="left:120.00px;top:518.30px" width="10.4" height="10.4" viewBox="0 0 16 16"><rect x="1" y="2" width="8" height="7" fill="#b9b9be"></rect><path d="M7 7l8 3.500-8 4z" fill="#8f8f96"></path></svg>
<svg class="a" style="left:133.20px;top:518.30px" width="10.4" height="10.4" viewBox="0 0 16 16"><rect x="1" y="2" width="8" height="7" fill="#9a9aa0"></rect><path d="M7 7l8 3.500-8 4z" fill="#77777f"></path><circle cx="12.500" cy="12.500" r="2.500" fill="#8a8a90"></circle></svg>
<svg class="a" style="left:148.20px;top:518.30px" width="10.4" height="10.4" viewBox="0 0 16 16"><rect x="3" y="3.500" width="10" height="9.500" fill="#bdbdc2"></rect></svg>
<svg class="a" style="left:161.70px;top:518.30px" width="10.4" height="10.4" viewBox="0 0 16 16"><circle cx="8" cy="8" r="6.500" fill="#b4b4ba" stroke="#9a9aa0"></circle><ellipse cx="10.200" cy="5.800" rx="3.400" ry="2.800" fill="#f4f4f6"></ellipse></svg>
<svg class="a" style="left:175.70px;top:518.30px" width="10.4" height="10.4" viewBox="0 0 16 16"><rect x="2" y="2" width="12" height="9" rx="1" fill="#f3f3f5" stroke="#8a8a92" stroke-width="1.300"></rect><rect x="4.500" y="4.500" width="7" height="1.200" fill="#8a8a92"></rect><rect x="4.500" y="7" width="5" height="1.200" fill="#8a8a92"></rect><rect x="5" y="12" width="6" height="2" fill="#8a8a92"></rect></svg>
<svg class="a" style="left:189.90px;top:518.30px" width="10.4" height="10.4" viewBox="0 0 16 16"><path d="M2 14l1-3.500L12 1.500l2.500 2.500-9 9z" fill="#b9b9bf" stroke="#8a8a92" stroke-width=".8"></path></svg>
<svg class="a" style="left:203.80px;top:518.30px" width="10.4" height="10.4" viewBox="0 0 16 16"><rect x="1.500" y="2" width="13" height="12" fill="#fff" stroke="#5f6f9a" stroke-width="1.300"></rect><rect x="1.500" y="2" width="13" height="3" fill="#a9b9e0"></rect><path d="M6 5v9" stroke="#9aa6c8" stroke-width="1"></path></svg>
<svg class="a" style="left:217.80px;top:518.30px" width="10.4" height="10.4" viewBox="0 0 16 16"><path d="M1 3.500h10M1 12.500h10" stroke="#3f62b0" stroke-width="1.500" stroke-dasharray="2.500 1.500"></path><path d="M8 2l3 1.500L8 5zM8 11l3 1.500L8 14z" fill="#3f62b0"></path><path d="M2 8h8" stroke="#e8a63a" stroke-width="2"></path><path d="M9 4.800l6 3.200-6 3.200z" fill="#e8a63a" stroke="#c07a12" stroke-width=".6"></path><path d="M6.500 1.500v13" stroke="#555" stroke-width="1.100"></path></svg>
<svg class="a" style="left:231.80px;top:518.30px" width="10.4" height="10.4" viewBox="0 0 16 16"><path d="M6 2h4v4.500h4.500v4H10V15H6v-4.500H1.500v-4H6z" fill="#9ad04a" stroke="#5f9a2a" stroke-width="1"></path></svg>
<svg class="a" style="left:251.39999999999998px;top:518.8000000000001px" width="6.600" height="4" viewBox="0 0 6.600 4"><path d="M.5.500H6.100L3.300 3.400Z" fill="#e6e6ea" stroke="#77777f" stroke-width=".8"></path></svg>
<div class="a" style="left:5.300px;top:532.700px;width:255.700px;height:18.500px;border:1px solid #8b8b8b;background:#fff"></div>
<span class="t " style="left:7px;top:534.8px;font-size:11.8px;color:#767676"><u class="l" style="width: 253px;"><u style="transform: scaleX(0.9253);">Type tags, projects, or working set names to match (</u></u></span>
<svg class="a" style="left:8.8px;top:559.8px" width="5" height="7" viewBox="0 0 5 7"><path d="M.8.700L3.800 3.500.8 6.300" stroke="#9a9a9a" stroke-width="1.100" fill="none"></path></svg>
<svg class="a" style="left:18.80px;top:558.60px" width="8.8" height="8.8" viewBox="0 0 16 16"><circle cx="8" cy="8" r="7.500" fill="#19a027"></circle><path d="M5.300 5.300a3.900 3.900 0 1 0 5.400 0" stroke="#fff" stroke-width="1.400" fill="none"></path><path d="M8 3.200v4.600" stroke="#fff" stroke-width="1.400"></path></svg>
<span class="t " style="left:30.8px;top:555.5px;font-size:12px;font-weight:bold;color:#111"><u class="l" style="width: 23.6px;"><u style="transform: scaleX(0.8626);">local</u></u></span>
<span class="t " style="left:5px;top:592px;"><i class="k" style="width: 68.5px;"><i style="transform: scaleX(0.7098);">フィルターにより</i></i><u class="l" style="width: 12.25px;"><u style="transform: scaleX(0.95);"> 1 </u></u><i class="k j" style="width:10.44px"><i>個</i></i><i class="k" style="width: 8.56px;"><i style="transform: scaleX(0.7098);">の</i></i><i class="k j" style="width:20.88px"><i>要素</i></i><i class="k" style="width: 8.56px;"><i style="transform: scaleX(0.7098);">が</i></i><i class="k j" style="width:31.32px"><i>非表示</i></i></span>
<div class="panel" style="left:268.800px;top:60px;width:727.500px;height:71.500px;border-radius:6px 6px 4px 4px;box-shadow:0 .5px 1px #cfd4e6"></div>
<div class="a" style="left:268.800px;top:60px;width:727.500px;height:21.500px;background:linear-gradient(#f5f6fc,#fafbfe);border-radius:6px 6px 0 0"></div>
<div class="a" style="left:268.800px;top:60px;width:86.500px;height:22px;background:#fff;border-radius:6px 6px 0 0"></div>
<svg class="a" style="left:270.70px;top:65.50px" width="10.2" height="10.2" viewBox="0 0 16 16"><circle cx="8" cy="8" r="7.600" fill="#5fb03a"></circle><path d="M3.300 12c-1.300-4.800 2.600-7.600 9.600-8.200.7 4.900-1.300 9.200-7.400 8.500-.9-.1-1.500-.2-2.200-.3z" fill="#fff"></path><path d="M3.400 12.200c2.300-1.200 5-2.900 7.200-5.600" stroke="#5fb03a" stroke-width="1" fill="none"></path></svg>
<span class="t " style="left:283.2px;top:62.900000000000006px;"><i class="k" style="width:57.50px"><i style="transform:scaleX(0.6809)">ダッシュボード</i></i></span>
<svg class="a" style="left:343.2px;top:67.1px" width="7" height="7" viewBox="0 0 7 7"><path d="M.6.6L2.300 2.300M6.400.6L4.700 2.300M.6 6.400L2.300 4.700M6.400 6.400L4.700 4.700" stroke="#9a9aa2" stroke-width=".9"></path><rect x="2" y="2" width="3" height="3" fill="none" stroke="#9a9aa2" stroke-width=".7"></rect></svg>
<svg class="a" style="left:965.1px;top:63.400000000000006px" width="9" height="5" viewBox="0 0 9 5"><rect x="1" y="1" width="7" height="2.800" rx=".8" fill="#fff" stroke="#85858d" stroke-width=".85"></rect></svg>
<svg class="a" style="left:980.0px;top:63.900000000000006px" width="9" height="8" viewBox="0 0 9 8"><rect x="1" y="1.200" width="7" height="5.800" fill="#fff" stroke="#6e6e76" stroke-width=".85"></rect><rect x=".6" y=".6" width="7.800" height="1.700" fill="#6e6e76"></rect></svg>
<div class="a" style="left:270px;top:82px;width:709px;height:47.500px;background:#34302d;border-top:4.200px solid #6db33f;overflow:hidden"><svg class="a" style="left:17px;top:9.300px" width="46" height="44" viewBox="-1 -1 46 44"><circle cx="21" cy="21" r="21" fill="#fff"></circle><path d="M37.900 3.300C36 9 31 13.200 25 14.200 19 15.200 14 14.500 10.500 17.500 6.500 21 5.500 27 9.700 32 13 36 20 38 27 36 34 34 39.500 27 40.600 19 41.200 13 40 8 37.900 3.300Z" fill="#34302d" stroke="#fff" stroke-width="1.300" stroke-linejoin="round"></path><path d="M12 35.500C22 33 31.500 25 36 16 32.500 26 25 33.500 18.500 36.500Z" fill="#fff"></path></svg><span class="a" style="left:69.200px;top:8.300px;font-size:36.600px;line-height:42px;color:#fff;-webkit-text-stroke:1.500px #fff;letter-spacing:1px;transform:scaleX(.915);transform-origin:0 0;white-space:nowrap">spring</span></div>
<span class="t " style="left:527.5px;top:109.2px;font-size:13.3px;color:#fff"><u class="l" style="width: 36.5px;"><u style="transform: scaleX(0.95);">DOCS</u></u></span>
<span class="t " style="left:600.5px;top:109.2px;font-size:13.3px;color:#fff"><u class="l" style="width: 50px;"><u style="transform: scaleX(0.9807);">GUIDES</u></u></span>
<span class="t " style="left:686.5px;top:109.2px;font-size:13.3px;color:#fff"><u class="l" style="width: 47.5px;"><u style="transform: scaleX(0.9737);">ISSUES</u></u></span>
<span class="t " style="left:770.5px;top:109.2px;font-size:13.3px;color:#fff"><u class="l" style="width: 36.5px;"><u style="transform: scaleX(0.9877);">BLOG</u></u></span>
<span class="t " style="left:843.0px;top:109.2px;font-size:13.3px;color:#fff"><u class="l" style="width: 48px;"><u style="transform: scaleX(0.9846);">FORUM</u></u></span>
<svg class="a" style="left:922px;top:105px" width="28" height="26" viewBox="0 0 28 26"><circle cx="11.500" cy="11" r="6.800" fill="none" stroke="#fff" stroke-width="3"></circle><path d="M16.500 16l7.500 7.500" stroke="#fff" stroke-width="3.600" stroke-linecap="round"></path></svg>
<div class="a" style="left:979px;top:82px;width:17.300px;height:47.500px;background:#f1f1f3"></div>
<svg class="a" style="left:982.0px;top:92.5px" width="10" height="6.5" viewBox="0 0 10 6.5"><path d="M1 5.5L5.0 1.300 9 5.5" stroke="#4d4d4d" stroke-width="1.7" fill="none"></path></svg>
<svg class="a" style="left:982.0px;top:113.3px" width="10" height="6.5" viewBox="0 0 10 6.5"><path d="M1 1.300L5.0 5.5 9 1.300" stroke="#4d4d4d" stroke-width="1.7" fill="none"></path></svg>
<div class="panel" style="left:268.800px;top:134.200px;width:727.500px;height:476.300px;border-radius:6px 6px 4px 4px;box-shadow:0 1px 1.500px #c3c8dc,-0.500px 0 0 #cfd2dc"></div>
<div class="a" style="left:268.800px;top:134.200px;width:727.500px;height:20.300px;background:#d2e1f3;border-radius:6px 6px 0 0;border-top:.7px solid #bcc3d0;border-bottom:.7px solid #c4cee0"></div>
<div class="a" style="left:268.800px;top:134.200px;width:68.500px;height:21px;background:#fff;border-radius:6px 6px 0 0;border-top:.7px solid #bcc3d0"></div>
<svg class="a" style="left:271.20px;top:140.20px" width="9.6" height="9.6" viewBox="0 0 16 16"><rect x="1.500" y="1.500" width="13" height="10" rx="1" fill="#dfe9f8" stroke="#2f5fae" stroke-width="1.400"></rect><rect x="4" y="4.500" width="6" height="1.300" fill="#2f5fae"></rect><rect x="4" y="7" width="8" height="1.300" fill="#2f5fae"></rect><rect x="4" y="13" width="8" height="1.800" fill="#2f5fae"></rect></svg>
<span class="t " style="left:282.5px;top:137.8px;"><i class="k" style="width:40.30px"><i style="transform:scaleX(0.6681)">コンソール</i></i></span>
<svg class="a" style="left:327.5px;top:141.7px" width="7" height="7" viewBox="0 0 7 7"><path d="M.6.6L2.300 2.300M6.400.6L4.700 2.300M.6 6.400L2.300 4.700M6.400 6.400L4.700 4.700" stroke="#9a9aa2" stroke-width=".9"></path><rect x="2" y="2" width="3" height="3" fill="none" stroke="#9a9aa2" stroke-width=".7"></rect></svg>
<svg class="a" style="left:342.50px;top:140.80px" width="9.6" height="9.6" viewBox="0 0 16 16"><rect x="1" y="4" width="9" height="3" fill="#3a9a3a"></rect><rect x="1" y="9" width="6" height="3" fill="#3a9a3a"></rect><rect x="8.500" y="7.500" width="6.500" height="6.500" rx="1.500" fill="#eef6ea" stroke="#3a9a3a" stroke-width="1.300"></rect></svg>
<span class="t " style="left:353.8px;top:138px;font-size:12px;"><u class="l" style="width: 41.8px;"><u style="transform: scaleX(0.8703);">Progress</u></u></span>
<svg class="a" style="left:400.10px;top:139.30px" width="10.2" height="10.2" viewBox="0 0 16 16"><rect x="2" y="1.500" width="12" height="13" fill="#f2f0e6" stroke="#a9a38a" stroke-width=".9"></rect><circle cx="8" cy="5" r="2.300" fill="#d8302a"></circle><path d="M8 8.500l3 5H5z" fill="#f0b429"></path></svg>
<span class="t " style="left:413.3px;top:138px;font-size:12px;"><u class="l" style="width: 46px;"><u style="transform: scaleX(0.9075);">Problems</u></u></span>
<div class="a" style="left:796.200px;top:135.200px;width:14px;height:12.600px;background:#b9d7f6;border:.8px solid #93c2f0"></div>
<div class="a" style="left:824.300px;top:135.200px;width:29px;height:12.600px;background:#b9d7f6;border:.8px solid #93c2f0"></div>
<div class="a" style="left:838.0px;top:135.5px;width:1px;height:12.0px;background:#93c2f0"></div>
<svg class="a" style="left:722.50px;top:137.50px" width="9.8" height="9.8" viewBox="0 0 16 16"><path d="M3 13c-1-3 1-5 4-5V5l5 4.500-5 4.500v-3c-2 0-3 .5-4 2z" fill="#ececf0" stroke="#aeb2bd" stroke-width="1"></path></svg>
<svg class="a" style="left:736.30px;top:137.50px" width="9.8" height="9.8" viewBox="0 0 16 16"><path d="M2.500 2.500l11 11M13.500 2.500l-11 11" stroke="#6c6c70" stroke-width="3.200"></path></svg>
<svg class="a" style="left:749.50px;top:137.50px" width="9.8" height="9.8" viewBox="0 0 16 16"><path d="M1.500 1.500l8 8M9.500 1.500l-8 8" stroke="#77777b" stroke-width="2.600"></path><path d="M6.500 6.500l8 8M14.500 6.500l-8 8" stroke="#6c6c70" stroke-width="2.600"></path></svg>
<svg class="a" style="left:765.20px;top:137.50px" width="9.8" height="9.8" viewBox="0 0 16 16"><rect x="3.500" y="3.500" width="9" height="9" fill="#c9c9ce" stroke="#b5b5bb"></rect></svg>
<div class="a" style="left:778.2px;top:136.7px;width:1px;height:10.600000000000023px;background:#9a9ea8"></div>
<svg class="a" style="left:785.00px;top:137.40px" width="10" height="10" viewBox="0 0 16 16"><path d="M2 1.500h8l3 3v10H2z" fill="#f6f3e6" stroke="#8a8a92" stroke-width=".9"></path><path d="M4 5h5M4 7.500h4" stroke="#8a8a92" stroke-width=".9"></path><path d="M7.500 8.500l6 6M13.500 8.500l-6 6" stroke="#5f5f66" stroke-width="1.700"></path></svg>
<svg class="a" style="left:798.30px;top:137.40px" width="10" height="10" viewBox="0 0 16 16"><path d="M2 1.500h8l3 3v10H2z" fill="#fbf4dc" stroke="#8a8a92" stroke-width=".9"></path><path d="M8 4h4M8 6.500h4M9.500 9h2.500" stroke="#4a6fb5" stroke-width="1"></path><rect x="1.500" y="9" width="7" height="5.500" fill="#e8b030" stroke="#9a6c14" stroke-width=".8"></rect><path d="M3.200 9V7.400c0-2.200 3.600-2.200 3.600 0V9" stroke="#9a6c14" stroke-width="1.100" fill="none"></path></svg>
<svg class="a" style="left:811.20px;top:137.40px" width="10" height="10" viewBox="0 0 16 16"><path d="M2 1.500h8l3 3v10H2z" fill="#fbf4dc" stroke="#b5b09a" stroke-width=".9"></path><path d="M4 6h6c2.500 0 2.500 4 0 4H7" stroke="#d9a13a" stroke-width="1.300" fill="none"></path><path d="M8.500 8L6 10l2.500 2z" fill="#d9a13a"></path></svg>
<svg class="a" style="left:826.60px;top:137.40px" width="10" height="10" viewBox="0 0 16 16"><rect x="1.500" y="2" width="12.500" height="9" rx="1" fill="#eef3fb" stroke="#4a6fb5" stroke-width="1.300"></rect><rect x="4" y="4.500" width="6" height="1.200" fill="#4a6fb5"></rect><rect x="5" y="12" width="6" height="2" fill="#4a6fb5"></rect><path d="M9 8l5 3-5 3z" fill="#5f86c9"></path></svg>
<svg class="a" style="left:840.50px;top:137.40px" width="10" height="10" viewBox="0 0 16 16"><rect x="1.500" y="2" width="12.500" height="9" rx="1" fill="#eef3fb" stroke="#4a6fb5" stroke-width="1.300"></rect><rect x="4" y="4.500" width="6" height="1.200" fill="#c43a3a"></rect><rect x="5" y="12" width="6" height="2" fill="#4a6fb5"></rect><path d="M9 8l5 3-5 3z" fill="#d64545"></path></svg>
<div class="a" style="left:854.3px;top:136.7px;width:1px;height:10.600000000000023px;background:#9a9ea8"></div>
<svg class="a" style="left:859.20px;top:137.40px" width="10" height="10" viewBox="0 0 16 16"><rect x="1.500" y="6" width="12.500" height="8" rx="1" fill="#eef3fb" stroke="#4a6fb5" stroke-width="1.300"></rect><path d="M8 8l5-6 2 1.500-5 6z" fill="#2f9a4a"></path><rect x="4" y="9" width="5" height="1.200" fill="#4a6fb5"></rect></svg>
<svg class="a" style="left:873.80px;top:137.40px" width="10" height="10" viewBox="0 0 16 16"><rect x="1.500" y="2" width="12.500" height="9" rx="1" fill="#f1f1f5" stroke="#8a8a96" stroke-width="1.300"></rect><rect x="4" y="4.500" width="6" height="1.200" fill="#8a8a96"></rect><rect x="5" y="12" width="6" height="2" fill="#8a8a96"></rect></svg>
<svg class="a" style="left:889.50px;top:141.00px" width="7" height="4" viewBox="0 0 7 4"><path d="M0 0H7L3.5 4Z" fill="#77777d"></path></svg>
<svg class="a" style="left:902.80px;top:136.90px" width="10.4" height="10.4" viewBox="0 0 16 16"><rect x="1" y="4" width="12" height="10.500" fill="#fdf6dc" stroke="#8a8466"></rect><rect x="1" y="4" width="12" height="2.500" fill="#7f8fb8"></rect><path d="M12.500 0l1 2 2.200.3-1.600 1.600.4 2.200-2-1-2 1 .4-2.200L9.300 2.300l2.200-.3z" fill="#f7dc8a" stroke="#cfa84e" stroke-width=".5"></path></svg>
<svg class="a" style="left:918.50px;top:141.00px" width="7" height="4" viewBox="0 0 7 4"><path d="M0 0H7L3.5 4Z" fill="#111"></path></svg>
<div class="a" style="left:930.9px;top:136.7px;width:1px;height:10.600000000000023px;background:#9a9ea8"></div>
<svg class="a" style="left:936.10px;top:137.30px" width="10.2" height="10.2" viewBox="0 0 16 16"><rect x="2" y="1" width="12" height="14" rx="1" fill="#e3e3fb" stroke="#3b3bd0" stroke-width="1.500"></rect><rect x="5" y="4" width="3" height="3" fill="#d83a3a"></rect><rect x="8.500" y="4" width="2.500" height="3" fill="#2e9a3a"></rect><rect x="5" y="8" width="6" height="1.500" fill="#3b3bd0"></rect><rect x="5" y="11" width="4" height="1.300" fill="#3b3bd0"></rect></svg>
<svg class="a" style="left:950.10px;top:137.10px" width="10.6" height="10.6" viewBox="0 0 16 16"><circle cx="8" cy="8" r="6.800" fill="#fff" stroke="#2f4fe0" stroke-width="1.700"></circle><path d="M4.500 12.500L8 3l3.500 9.500M5.800 9.500h4.400" stroke="#e02a2a" stroke-width="2.200" fill="none"></path></svg>
<svg class="a" style="left:965.3px;top:138.2px" width="9" height="5" viewBox="0 0 9 5"><rect x="1" y="1" width="7" height="2.800" rx=".8" fill="#fff" stroke="#85858d" stroke-width=".85"></rect></svg>
<svg class="a" style="left:979.9px;top:138px" width="9" height="8" viewBox="0 0 9 8"><rect x="1" y="1.200" width="7" height="5.800" fill="#fff" stroke="#6e6e76" stroke-width=".85"></rect><rect x=".6" y=".6" width="7.800" height="1.700" fill="#6e6e76"></rect></svg>
<span class="t " style="left:271.2px;top:156.4px;"><u class="l" style="width: 6.86px;"><u style="transform: scaleX(1.012);">&lt;</u></u><i class="k j" style="width:20.88px"><i>終了</i></i><u class="l" style="width: 6.86px;"><u style="transform: scaleX(1.012);">&gt;</u></u></span>
<span class="t " style="left:310.2px;top:156.4px;"><u class="l" style="width: 295.8px;"><u style="transform: scaleX(0.9464);">gs-accessing-data-mysql-complete - Application [Spring Boot</u></u></span>
<span class="t " style="left:610.6px;top:156.4px;"><i class="k" style="width:65.00px"><i style="transform:scaleX(0.6735)">アプリケーション</i></i></span>
<span class="t " style="left:675.6px;top:156.4px;"><u class="l" style="width: 315.4px;"><u style="transform: scaleX(0.9222);">] C:¥Program Files¥Java¥jre1.8.0_144¥bin¥javaw.exe (2017/11/24</u></u></span>
<div class="a" style="left:270.200px;top:170.900px;width:725.500px;height:.8px;background:#a6a6a6"></div>
<div class="a" style="left:978.800px;top:173px;width:17px;height:422.500px;background:#f0f0f0"></div>
<div class="a" style="left:979.300px;top:197.500px;width:14.600px;height:33px;background:#cdcdcd"></div>
<svg class="a" style="left:982.5px;top:177.95px" width="9" height="6.0" viewBox="0 0 9 6.0"><path d="M1 5.0L4.5 1.300 8 5.0" stroke="#606060" stroke-width="1.5" fill="none"></path></svg>
<svg class="a" style="left:982.5px;top:583.85px" width="9" height="6.0" viewBox="0 0 9 6.0"><path d="M1 1.300L4.5 5.0 8 1.300" stroke="#606060" stroke-width="1.5" fill="none"></path></svg>
<div class="a" style="left:269.300px;top:595.500px;width:709.500px;height:14.600px;background:#f0f0f0;border-radius:0 0 0 4px"></div>
<div class="a" style="left:978.800px;top:595.500px;width:17.500px;height:15px;background:#fbfbfd;border-radius:0 0 4px 0"></div>
<div class="a" style="left:286px;top:595.800px;width:120px;height:14px;background:#cdcdcd"></div>
<svg class="a" style="left:274.45px;top:598.3px" width="6.0" height="9" viewBox="0 0 6.0 9"><path d="M5.0 1L1.300 4.5 5.0 8" stroke="#606060" stroke-width="1.5" fill="none"></path></svg>
<svg class="a" style="left:967.05px;top:598.1px" width="6.0" height="9" viewBox="0 0 6.0 9"><path d="M1.300 1L5.0 4.5 1.300 8" stroke="#606060" stroke-width="1.5" fill="none"></path></svg>
<div class="a" style="left:271.300px;top:411.500px;width:619.300px;height:14.400px;background:#3399ff;border-left:.8px solid #3a3a3a"></div>
<div class="a" style="left:977px;top:288.600px;width:1px;height:7.400px;background:#e0a070"></div>
<div id="con"><div></div><div>2017-11-24 10:28:23.925 <span class="i"> INFO</span> <span class="p">6004</span> --- [           main] <span class="c">hello.Application                       </span> : Starting Application on</div><div>2017-11-24 10:28:23.928 <span class="i"> INFO</span> <span class="p">6004</span> --- [           main] <span class="c">hello.Application                       </span> : No active profile set</div><div>2017-11-24 10:28:23.981 <span class="i"> INFO</span> <span class="p">6004</span> --- [           main] <span class="c">ationConfigEmbeddedWebApplicationContext</span> : Refreshing org.spring</div><div>2017-11-24 10:28:25.207 <span class="i"> INFO</span> <span class="p">6004</span> --- [           main] <span class="c">s.b.c.e.t.TomcatEmbeddedServletContainer</span> : Tomcat initialized</div><div>2017-11-24 10:28:25.224 <span class="i"> INFO</span> <span class="p">6004</span> --- [           main] <span class="c">o.apache.catalina.core.StandardService  </span> : Starting service</div><div>2017-11-24 10:28:25.224 <span class="i"> INFO</span> <span class="p">6004</span> --- [           main] <span class="c">org.apache.catalina.core.StandardEngine </span> : Starting Servlet</div><div>2017-11-24 10:28:25.323 <span class="i"> INFO</span> <span class="p">6004</span> --- [ost-startStop-1] <span class="c">o.a.c.c.C.[Tomcat].[localhost].[/]      </span> : Initializing Spring</div><div>2017-11-24 10:28:25.323 <span class="i"> INFO</span> <span class="p">6004</span> --- [ost-startStop-1] <span class="c">o.s.web.context.ContextLoader           </span> : Root WebApplicationContext</div><div>2017-11-24 10:28:25.470 <span class="i"> INFO</span> <span class="p">6004</span> --- [ost-startStop-1] <span class="c">o.s.b.w.servlet.ServletRegistrationBean </span> : Mapping servlet</div><div>2017-11-24 10:28:25.470 <span class="i"> INFO</span> <span class="p">6004</span> --- [ost-startStop-1] <span class="c">o.s.b.w.servlet.FilterRegistrationBean  </span> : Mapping filter</div><div>2017-11-24 10:28:25.470 <span class="i"> INFO</span> <span class="p">6004</span> --- [ost-startStop-1] <span class="c">o.s.b.w.servlet.FilterRegistrationBean  </span> : Mapping filter</div><div>2017-11-24 10:28:25.470 <span class="i"> INFO</span> <span class="p">6004</span> --- [ost-startStop-1] <span class="c">o.s.b.w.servlet.FilterRegistrationBean  </span> : Mapping filter</div><div>2017-11-24 10:28:25.470 <span class="i"> INFO</span> <span class="p">6004</span> --- [ost-startStop-1] <span class="c">o.s.b.w.servlet.FilterRegistrationBean  </span> : Mapping filter</div><div><span class="r">Fri Nov 24 10:28:25 GMT+09:00 2017 WARN: Establishing SSL connection without server's identity verification is not recommended.</span></div><div>2017-11-24 10:28:25.939 <span class="e">ERROR</span> <span class="p">6004</span> --- [           main] <span class="c">o.a.tomcat.jdbc.pool.ConnectionPool     </span> : Unable to create</div><div></div><div><span class="sel">java.sql.SQLException: Access denied for user 'springuser'@'localhost' (using password: YES)</span></div><div>        at com.mysql.jdbc.SQLError.createSQLException(SQLError.java:964) ~[mysql-connector-java-5.1.44.jar:5.1.44]</div><div>        at com.mysql.jdbc.MysqlIO.checkErrorPacket(MysqlIO.java:3973) ~[mysql-connector-java-5.1.44.jar:5.1.44]</div><div>        at com.mysql.jdbc.MysqlIO.checkErrorPacket(MysqlIO.java:3909) ~[mysql-connector-java-5.1.44.jar:5.1.44]</div><div>        at com.mysql.jdbc.MysqlIO.checkErrorPacket(MysqlIO.java:873) ~[mysql-connector-java-5.1.44.jar:5.1.44]</div><div>        at com.mysql.jdbc.MysqlIO.proceedHandshakeWithPluggableAuthentication(MysqlIO.java:1710) ~[mysql-connector-java-5.1.44.jar:5.1.44]</div><div>        at com.mysql.jdbc.MysqlIO.doHandshake(MysqlIO.java:1226) ~[mysql-connector-java-5.1.44.jar:5.1.44]</div><div>        at com.mysql.jdbc.ConnectionImpl.coreConnect(ConnectionImpl.java:2191) ~[mysql-connector-java-5.1.44.jar:5.1.44]</div><div>        at com.mysql.jdbc.ConnectionImpl.connectOneTryOnly(ConnectionImpl.java:2222) ~[mysql-connector-java-5.1.44.jar:5.1.44]</div><div>        at com.mysql.jdbc.ConnectionImpl.createNewIO(ConnectionImpl.java:2017) ~[mysql-connector-java-5.1.44.jar:5.1.44]</div><div>        at com.mysql.jdbc.ConnectionImpl.&lt;init&gt;(ConnectionImpl.java:779) ~[mysql-connector-java-5.1.44.jar:5.1.44]</div><div>        at com.mysql.jdbc.JDBC4Connection.&lt;init&gt;(JDBC4Connection.java:47) ~[mysql-connector-java-5.1.44.jar:5.1.44]</div><div>        at sun.reflect.NativeConstructorAccessorImpl.newInstance0(Native Method) ~[na:1.8.0_144]</div></div>
<div class="a" style="left:912.200px;top:613.500px;width:1px;height:10.500px;background:repeating-linear-gradient(#b3b5c6 0 1.200px,transparent 1.200px 2.600px)"></div>
<div class="panel" style="left:999px;top:60px;width:30px;height:272.300px;border-radius:6px 0 0 4px;box-shadow:0 1px 1.500px #c3c8dc"></div>
<svg class="a" style="left:1001.20px;top:66.20px" width="10.4" height="10.4" viewBox="0 0 16 16"><rect x="1" y="1.500" width="4" height="3.500" fill="#fff" stroke="#3b78c9" stroke-width="1.300"></rect><rect x="1" y="9.500" width="4" height="3.500" fill="#fff" stroke="#3b78c9" stroke-width="1.300"></rect><path d="M7.500 3h7M7.500 7.500h5M7.500 11.500h7" stroke="#3b78c9" stroke-width="1.600"></path></svg>
<span class="t " style="left:1014px;top:63px;"><i class="k" style="width:50.00px"><i style="transform:scaleX(0.6908)">アウトライン</i></i></span>
<span class="t " style="left:1001.2px;top:82.6px;"><i class="k j" style="width:20.88px"><i>表示</i></i><i class="k" style="width: 129.13px;"><i style="transform: scaleX(0.7645);">するアウトラインはありません</i></i></span>
<div class="panel" style="left:999px;top:335.500px;width:30px;height:275px;border-radius:6px 0 0 4px;box-shadow:0 1px 1.500px #c3c8dc"></div>
<svg class="a" style="left:1001.10px;top:344.30px" width="10.4" height="10.4" viewBox="0 0 16 16"><path d="M1.500 12.500C2 7.500 6 4 14.500 3.500c0 5.500-4 9.500-10.500 8z" fill="#a9cf86"></path><path d="M1 14c3-3 6-5 10-7" stroke="#d9a13a" stroke-width="1.200" fill="none"></path></svg>
<span class="t g" style="left:1013.8px;top:341.8px;font-size:12px;"><u class="l" style="width: 80px;"><u style="transform: scaleX(0.9671);">Spring Explorer</u></u></span>
<svg class="a" style="left:1004.3px;top:378.8px" width="7" height="5" viewBox="0 0 7 5"><path d="M.7.800L3.500 3.800 6.300.8" stroke="#3c3c3c" stroke-width="1.150" fill="none"></path></svg>
<svg class="a" style="left:1014.60px;top:376.40px" width="8.8" height="8.8" viewBox="0 0 16 16"><circle cx="8" cy="8" r="7.500" fill="#19a027"></circle><path d="M5.300 5.300a3.900 3.900 0 1 0 5.400 0" stroke="#fff" stroke-width="1.400" fill="none"></path><path d="M8 3.200v4.600" stroke="#fff" stroke-width="1.400"></path></svg>
<div class="a" style="left:999.500px;top:595.800px;width:25px;height:14px;background:#f0f0f0"></div>
<div class="a" style="left:1017.400px;top:595.800px;width:8px;height:14px;background:#cdcdcd"></div>
<svg class="a" style="left:1005.75px;top:598.1px" width="6.0" height="9" viewBox="0 0 6.0 9"><path d="M5.0 1L1.300 4.5 5.0 8" stroke="#606060" stroke-width="1.5" fill="none"></path></svg>
</body></html>
